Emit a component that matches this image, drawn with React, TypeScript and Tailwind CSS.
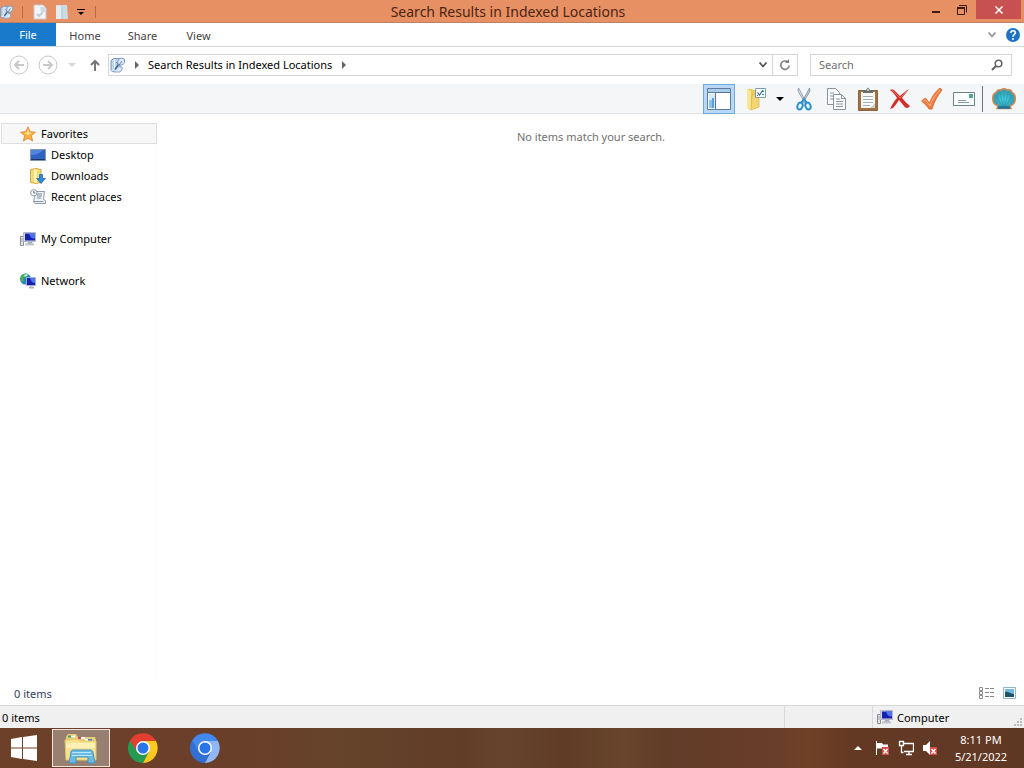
import type { ReactNode } from "react";

type IconProps = { className?: string };

function SearchPageIcon({ className = "w-4 h-4" }: IconProps) {
  return (
    <svg viewBox="0 0 16 16" className={className} fill="none">
      <path d="M4 1.500h6v11l-1.500 2h-6l-1.500-1v-10z" fill="#bed5ee" stroke="#7391b8" />
      <path d="M4.500 2v10l-3 1.500" stroke="#e9f2fb" />
      <path d="M10 10h2v3l-2 2H3.500" fill="#dce9f6" stroke="#8ba6c8" />
      <path d="M5 12.500l3.500-5" stroke="#44648f" strokeWidth="1.600" />
      <path d="M8.500 2.500l2.500-1.500 3.500 1v3.500l-2 2.500H9L7.500 6z" fill="#dcebf8" stroke="#7c99bd" />
      <path d="M6 5l3 3 3-4" stroke="#5f7fab" />
    </svg>
  );
}

function ComputerIcon({ className = "w-4 h-4" }: IconProps) {
  return (
    <svg viewBox="0 0 16 16" className={className}>
      <path d="M.5 5.500h3v9h-3z" fill="#e3e5e9" stroke="#8b8e96" />
      <path d="M1.500 8h1M1.500 10h1" stroke="#666" />
      <path d="M3.500 1.500h12v9h-12z" fill="#d4d7e2" stroke="#b4b8c8" />
      <path d="M5 2.500h10v7H5z" fill="#1420ae" />
      <path d="M9 2.500h6v5c-4 0-5-2-6-5z" fill="#4e72ea" />
      <path d="M8 11h4l1 2H7z" fill="#a8acb9" />
      <path d="M5 13.500h9" stroke="#c1c4cd" strokeWidth="2" />
    </svg>
  );
}

function NetworkIcon() {
  return (
    <svg viewBox="0 0 16 16" className="w-4 h-4">
      <circle cx="5.500" cy="6" r="5.500" fill="#2184c7" />
      <path d="M1 4c2-4 6-4 7-3L6 4 3 5l1 3-2 1C0 7 0 5 1 4z" fill="#4fb34a" />
      <path d="M4 2l3-1 1 1-3 2z" fill="#d7f0dc" />
      <path d="M6.500 4.500h9v8h-9z" fill="#cfd3e0" stroke="#a9aec2" />
      <path d="M7 5h8v7H7z" fill="#1420b4" />
      <path d="M10 5h5v5c-3 0-4-2-5-5z" fill="#4a76ee" />
      <path d="M9 14.500h5" stroke="#abb0bd" strokeWidth="2" />
    </svg>
  );
}

function StarIcon() {
  return (
    <svg viewBox="0 0 16 16" className="w-4 h-4">
      <path
        d="M8 .8l2.100 4.900 5.300.5-4 3.500 1.200 5.300L8 12.200 3.400 15l1.200-5.300-4-3.500 5.300-.5z"
        fill="#fbb040"
        stroke="#d9822b"
        strokeWidth=".8"
      />
      <path d="M8 3l1.300 3.600 3 .4L8 9 4 7l2.800-.4z" fill="#ffe08a" />
    </svg>
  );
}

function DesktopIcon() {
  return (
    <svg viewBox="0 0 16 16" className="w-4 h-4">
      <path d="M.5 2.500h15v11H.5z" fill="#2f62c2" stroke="#8296b5" />
      <path d="M1 3h12c-3 3-6 5-12 5z" fill="#5285dc" />
      <path d="M1 12.500h14" stroke="#23365c" />
    </svg>
  );
}

function DownloadsIcon() {
  return (
    <svg viewBox="0 0 16 16" className="w-4 h-4">
      <path d="M.5 1.500L6 .5l5 1v13l-5 1-5.500-1z" fill="#f3d878" stroke="#d2ac45" />
      <path d="M4 1l3 1v13l-3-1z" fill="#fff0b4" />
      <path d="M9.500 6.500h3v4h3L11 15.500l-4.500-5h3z" fill="#2d8ad8" stroke="#1c62a6" strokeWidth=".7" />
    </svg>
  );
}

function RecentIcon() {
  return (
    <svg viewBox="0 0 16 16" className="w-4 h-4" fill="none">
      <path d="M5 2.500h9.500l-1 8 2 1v3H5l-1.500-2 1-4z" fill="#eef1f5" stroke="#919ca8" />
      <path d="M7 5h5M7 7h5M7 9h4" stroke="#7e8b9c" />
      <path d="M3.500 12.500h10" stroke="#8995a3" />
      <circle cx="3.800" cy="3.800" r="3.200" fill="#f5f7fa" stroke="#8c99a8" />
      <path d="M3.800 2v2h1.500" stroke="#667" />
    </svg>
  );
}

function PaneIcon() {
  return (
    <svg viewBox="0 0 24 24" className="w-6 h-6">
      <path d="M.5 1.500h23v21H.5z" fill="#fff" stroke="#5b7c9d" />
      <path d="M1 2h22v3H1z" fill="#a9cdea" />
      <path d="M1 5.500h22M8.500 5v17" stroke="#54779b" />
      <path d="M2 7h6v14H2z" fill="#d6e8f9" />
      <path d="M2 13h5v8H2z" fill="#8fbff0" />
      <path d="M5 11h2v10H5z" fill="#5b9ce3" />
    </svg>
  );
}

function FolderOptionsIcon() {
  return (
    <svg viewBox="0 0 24 24" className="w-6 h-6">
      <path d="M3 2h5l4 2v17l-6 2-3-2z" fill="#edcb5b" />
      <path d="M3 2l4 2v19l-4-2z" fill="#fae699" />
      <path d="M8 8l7-1v13l-8 3z" fill="#f4d671" stroke="#d9b64c" strokeWidth=".7" />
      <path d="M11.500 1.500h10v9h-10z" fill="#f5fbff" stroke="#819bad" />
      <path d="M18 4.500h2M18 7.500h2M13 8.500h1" fill="none" stroke="#3979ad" />
      <path d="M13.500 5.500l2 2.500 3.500-5" fill="none" stroke="#2d6f78" strokeWidth="1.200" />
    </svg>
  );
}

function CutIcon() {
  return (
    <svg viewBox="0 0 24 24" className="w-6 h-6" fill="none">
      <path d="M6.500 1L15 17l-2-1L6 4z" fill="#e3e8ed" stroke="#7a8c9c" strokeWidth=".8" />
      <path d="M17.500 1L9 17l2-1 7-12z" fill="#c3ccd5" stroke="#7a8c9c" strokeWidth=".8" />
      <ellipse cx="8" cy="19" rx="2.500" ry="3.500" stroke="#2b91ce" strokeWidth="2" transform="rotate(22 8 19)" />
      <ellipse cx="16" cy="19" rx="2.500" ry="3.500" stroke="#2b91ce" strokeWidth="2" transform="rotate(-22 16 19)" />
      <path d="M9 16l3-4 3 4" stroke="#2b91ce" strokeWidth="1.800" />
    </svg>
  );
}

function CopyIcon() {
  return (
    <svg viewBox="0 0 24 24" className="w-6 h-6" fill="none" stroke="#8793a0">
      <path d="M3.500 1.500h8l4 4v12h-12z" fill="#f8fafc" />
      <path d="M6 6h4M6 9h3M6 12h3" />
      <path d="M9.500 7.500h8l4 4v11h-12z" fill="#fdfefe" />
      <path d="M17.500 7.500v4h4M12 12h4M12 14.500h7M12 17h7M12 19.500h7" />
    </svg>
  );
}

function PasteIcon() {
  return (
    <svg viewBox="0 0 24 24" className="w-6 h-6">
      <path d="M2.500 3.500h19v20h-19z" fill="#a5703f" stroke="#8a6541" />
      <path d="M5 5h14v16H5z" fill="#fafbf8" />
      <path d="M14 21l5-5v5z" fill="#ccd0cf" />
      <path d="M7 9.500h10M7 12.500h10M7 15.500h10M7 18.500h7" stroke="#a3b0b4" />
      <path d="M7 6V3h3l2-2.500L14 3h3v3z" fill="#66716b" />
      <circle cx="12" cy="3" r="1" fill="#dfe5df" />
    </svg>
  );
}

function DeleteIcon() {
  return (
    <svg viewBox="0 0 24 24" className="w-6 h-6">
      <path
        d="M2 3c3-1 4 0 5 1l5 5c3-3 6-5 9-7-2 3-5 6-7 9 3 3 5 6 8 8-2 3-5 2-6 0l-5-6c-2 3-4 6-6 8l-3 1c2-4 4-8 7-11-2-3-4-6-7-8z"
        fill="#cf2f28"
      />
      <path d="M4 3l8 8 7-7" fill="none" stroke="#e9705f" />
    </svg>
  );
}

function CheckIcon() {
  return (
    <svg viewBox="0 0 24 24" className="w-6 h-6">
      <path
        d="M1.500 14l4-3 4 5C12 9 16 4 20 1l2 2c-4 5-8 12-10 19H9c-2-3-5-6-7.500-8z"
        fill="#ef7c3e"
        stroke="#d8652e"
        strokeWidth=".8"
      />
      <path d="M3.500 14l2-1 4.500 6C12 12 16 7 20 3" fill="none" stroke="#f9b183" />
    </svg>
  );
}

function MailIcon() {
  return (
    <svg viewBox="0 0 24 24" className="w-6 h-6">
      <path d="M1.500 5.500h21v13h-21z" fill="#fdfefe" stroke="#6b818b" />
      <path d="M17 7h4v4h-4z" fill="#51a696" />
      <path d="M6 13.500h8M6 15.500h11" stroke="#8396a3" />
    </svg>
  );
}

function ShellIcon() {
  return (
    <svg viewBox="0 0 24 24" className="w-6 h-6">
      <defs>
        <radialGradient id="shell" cx="50%" cy="55%" r="60%">
          <stop offset="0" stopColor="#45dce8" />
          <stop offset=".6" stopColor="#35a3b8" />
          <stop offset="1" stopColor="#5d8f8c" />
        </radialGradient>
      </defs>
      <path
        d="M5 21.500l1-2.500C2 18 0 14 1 9.500 1 7 3 6 4 5.500c1-2 3-3 4.500-2.500 2-1.500 5-1.500 7 0 2-.5 4 .5 4.500 2.500 1 .5 3 1.500 3 4 1 4.500-1 8.500-5 9.500l1 2.500z"
        fill="url(#shell)"
        stroke="#cf8a52"
        strokeWidth="1.500"
      />
      <path d="M10 19L4 8M11 19L8 5M12 19V4M13 19l3-14M14 19l6-11" stroke="#2793ad" strokeWidth=".7" />
      <path d="M6 20.500h12" stroke="#1f6f96" strokeWidth="2.500" />
    </svg>
  );
}

function ChromeIcon({ top, left, right }: { top: string; left: string; right: string }) {
  return (
    <svg viewBox="0 0 30 30" className="w-[30px] h-[30px]">
      <path d="M15 15h-7L2 7.500A15 15 0 0 0 15 30l6.100-11.500z" fill={left} />
      <path d="M15 8h13a15 15 0 0 1-13 22l6.100-11.500z" fill={right} />
      <path d="M2 7.500a15 15 0 0 1 26 .5H15l-6.100 10.500z" fill={top} />
      <circle cx="15" cy="15" r="7" fill="#fff" />
      <circle cx="15" cy="15" r="5.500" fill="#2975e8" />
    </svg>
  );
}

function ExplorerIcon() {
  return (
    <svg viewBox="0 0 34 32" className="w-[34px] h-8">
      <path d="M2 5l2-3h8l2 3h17l1 3v20H2z" fill="#e6cd7c" />
      <path d="M4 3.500h5v2H4z" fill="#4b9b52" />
      <path d="M14 5h4v2h-4z" fill="#d2493d" />
      <path d="M22 7h6v2h-6z" fill="#3d83c8" />
      <path d="M7 3.500h4v2H7zM17 5h4v2h-4zM21 7h3v2h-3z" fill="#fff" />
      <path d="M1 8l12-1 3 2h16v19H2z" fill="#f7e292" stroke="#e4c765" />
      <path d="M2 11h29v5H2z" fill="#fdf0b6" />
      <path d="M5 31l2-11c0-2 2-2 2-2h17c2 0 3 1 3 3l2 10h-7v-6H12v6z" fill="#6cb9e5" stroke="#3c95c9" />
      <path d="M8 20.500h19M8 23.500h20" stroke="#bce8fb" />
    </svg>
  );
}

function TaskFlagIcon() {
  return (
    <svg viewBox="0 0 16 16" className="w-4 h-4">
      <path d="M2.500 1v14" stroke="#fff" />
      <path d="M3 3h5l1 1.500h5V10H9L8 8.500H3z" fill="#fff" />
      <path d="M8 7h7v8H8z" fill="#d84b47" />
      <path d="M9.500 9l4 4.500m0-4.500l-4 4.500" stroke="#fff" strokeWidth="1.500" />
    </svg>
  );
}

function TaskNetworkIcon() {
  return (
    <svg viewBox="0 0 16 16" className="w-4 h-4" fill="none" stroke="#fff">
      <path d="M6 3.500h9.500v8H6M8 14.500h6M11 12v2" strokeWidth="1.300" />
      <path d="M1.500 1.500h4v4h-4zM3.500 6v6.500h2" strokeWidth="1.300" />
    </svg>
  );
}

function SpeakerIcon() {
  return (
    <svg viewBox="0 0 16 16" className="w-4 h-4">
      <path d="M1 5h3l4-4v14l-4-4H1z" fill="#fff" />
      <path d="M8 7h7v8H8z" fill="#d84b47" />
      <path d="M9.500 9l4 4.500m0-4.500l-4 4.500" stroke="#fff" strokeWidth="1.500" />
    </svg>
  );
}

function Arrow({ className }: IconProps) {
  return (
    <svg viewBox="0 0 8 4" className={className}>
      <path d="M0 0h8L4 4z" fill="currentColor" />
    </svg>
  );
}

function RightArrow() {
  return (
    <svg viewBox="0 0 4 8" className="w-1 h-2">
      <path d="M0 0l4 4-4 4z" fill="#666" />
    </svg>
  );
}

const tools = [
  { label: "Cut", icon: <CutIcon /> },
  { label: "Copy", icon: <CopyIcon /> },
  { label: "Paste", icon: <PasteIcon /> },
  { label: "Delete", icon: <DeleteIcon /> },
  { label: "Rename", icon: <CheckIcon /> },
  { label: "Email", icon: <MailIcon /> },
];

function TitleBar() {
  return (
    <header className="grid grid-cols-[1fr_auto_1fr] h-[23px] bg-[#e79063] border-b border-[#b98267] text-[#4b2413]">
      <div className="flex items-center">
        <SearchPageIcon className="w-[14px] h-4" />
        <span className="w-px h-3 ml-2 mr-2.5 bg-[#b76845]" />
        <button aria-label="Properties" className="mr-2">
          <svg viewBox="0 0 14 16" className="w-[14px] h-4">
            <path d="M1 1h9l3 3v11H1z" fill="#f4f5fa" stroke="#cfc5cb" />
            <path d="M7 3h5v5H8z" fill="#c8dceb" />
            <path d="M4 10l2 2 4-4" fill="none" stroke="#c3cddd" strokeWidth="2" />
          </svg>
        </button>
        <button aria-label="New folder">
          <svg viewBox="0 0 14 16" className="w-[14px] h-4">
            <path d="M1 1h11l1 14H1z" fill="#cbdce5" />
            <path d="M1 1l5 1v13H1z" fill="#e3edf0" />
            <path d="M7 3v12" stroke="#b5c8d3" />
          </svg>
        </button>
        <button aria-label="Customize Quick Access Toolbar" className="ml-2 text-black">
          <svg viewBox="0 0 8 8" className="w-2 h-2">
            <path d="M0 1h8v1H0zM1 4h6L4 7z" fill="currentColor" />
          </svg>
        </button>
        <span className="w-px h-3 ml-2.5 bg-[#b76845]" />
      </div>
      <h1 className="pr-2 text-[14px] leading-[23px]">Search Results in Indexed Locations</h1>
      <div className="flex justify-end items-start pr-[3px]">
        <button aria-label="Minimize" className="w-6 h-[19px] flex items-end justify-center pb-1.5">
          <span className="w-2 h-0.5 bg-[#3c1b10]" />
        </button>
        <button aria-label="Restore" className="w-7 h-[19px] flex items-center justify-center">
          <svg viewBox="0 0 10 10" className="w-2.5 h-2.5" fill="none" stroke="#3c1b10">
            <path d="M.5 3h7v6.500h-7z" />
            <path d="M0 3h8" strokeWidth="2" />
            <path d="M2 .5h7.500v7" />
          </svg>
        </button>
        <button aria-label="Close" className="w-[45px] h-[19px] bg-[#c75050] flex items-center justify-center">
          <svg viewBox="0 0 8 8" className="w-2 h-2">
            <path d="M.5.5l7 7m0-7l-7 7" stroke="#fff" strokeWidth="1.500" />
          </svg>
        </button>
      </div>
    </header>
  );
}

function Ribbon() {
  return (
    <div className="flex h-6 border-b border-[#d5d8db]">
      <button className="w-14 bg-[#1979ca] text-white">File</button>
      <button className="w-[58px] pt-0.5">Home</button>
      <button className="w-[57px] pt-0.5">Share</button>
      <button className="w-[55px] pt-0.5">View</button>
      <div className="flex items-center gap-2.5 ml-auto pr-1">
        <button aria-label="Expand ribbon">
          <svg viewBox="0 0 8 6" className="w-2 h-1.5" fill="none" stroke="#999" strokeWidth="1.800">
            <path d="M.5.5L4 4.500 7.500.5" />
          </svg>
        </button>
        <button aria-label="Help">
          <svg viewBox="0 0 14 14" className="w-[14px] h-[14px]" fill="none">
            <circle cx="7" cy="7" r="7" fill="#1c73c4" />
            <path d="M4.800 5c0-3 4.600-3 4.600 0C9.400 6.500 7 6.500 7 8.700" stroke="#fff" strokeWidth="1.600" />
            <circle cx="7" cy="11" r="1" fill="#fff" />
          </svg>
        </button>
      </div>
    </div>
  );
}

function AddressRow() {
  return (
    <div className="flex items-center h-[37px] pl-[9px] pr-3 pb-px">
      <button aria-label="Back">
        <svg viewBox="0 0 20 20" className="w-5 h-5" fill="none" stroke="#c8c8c8">
          <circle cx="10" cy="10" r="9" />
          <path d="M15 10H6m4-4l-4 4 4 4" strokeWidth="2" />
        </svg>
      </button>
      <button aria-label="Forward" className="ml-[9px]">
        <svg viewBox="0 0 20 20" className="w-5 h-5" fill="none" stroke="#c8c8c8">
          <circle cx="10" cy="10" r="9" />
          <path d="M5 10h9m-4-4l4 4-4 4" strokeWidth="2" />
        </svg>
      </button>
      <button aria-label="Recent locations" className="ml-2.5 text-[#d6d6d6]">
        <Arrow className="w-2 h-1" />
      </button>
      <button aria-label="Up" className="ml-[13px]">
        <svg viewBox="0 0 12 12" className="w-3 h-3" fill="none" stroke="#777" strokeWidth="2">
          <path d="M6 12V2M2 6l4-4 4 4" />
        </svg>
      </button>
      <div className="flex flex-1 items-center h-[22px] ml-[7px] border border-[#d3d6d9] pl-px">
        <SearchPageIcon />
        <span className="ml-[9px]">
          <RightArrow />
        </span>
        <a href="#results" className="ml-[9px] mr-2.5 text-black">
          Search Results in Indexed Locations
        </a>
        <RightArrow />
        <button aria-label="Previous locations" className="ml-auto mr-[5px]">
          <svg viewBox="0 0 8 6" className="w-2 h-1.5" fill="none" stroke="#555" strokeWidth="1.800">
            <path d="M.5.5L4 4.500 7.500.5" />
          </svg>
        </button>
        <button aria-label="Refresh" className="w-[25px] h-full flex items-center justify-center border-l border-[#d3d6d9]">
          <svg viewBox="0 0 12 12" className="w-3 h-3" fill="none" stroke="#808080" strokeWidth="1.600">
            <path d="M9 3.200A4.200 4.200 0 1 0 10.200 6.500" />
            <path d="M6 4h4V0z" fill="#808080" stroke="none" />
          </svg>
        </button>
      </div>
      <label className="flex items-center w-[202px] h-[22px] ml-3 px-2 border border-[#d3d6d9]">
        <input
          type="text"
          aria-label="Search"
          placeholder="Search"
          className="flex-1 min-w-0 outline-none placeholder:text-[#707070]"
        />
        <svg viewBox="0 0 12 12" className="w-3 h-3" fill="none" stroke="#666">
          <circle cx="7.500" cy="4.500" r="3.300" strokeWidth="1.600" />
          <path d="M5 7L1 11" strokeWidth="2.200" />
        </svg>
      </label>
    </div>
  );
}

function Toolbar() {
  return (
    <div className="flex justify-end items-center h-[30px] bg-[#f4f6f8] border-b border-[#e1e4e7] pr-2">
      <button
        aria-label="Navigation pane"
        className="w-8 h-[30px] flex items-center justify-center bg-[#b9d8f5] border border-[#70a8dd]"
      >
        <PaneIcon />
      </button>
      <button aria-label="Folder options" className="ml-[9px]">
        <FolderOptionsIcon />
      </button>
      <button aria-label="More options" className="ml-2 text-black">
        <Arrow className="w-2 h-1" />
      </button>
      <div className="flex gap-2 ml-2">
        {tools.map((tool) => (
          <button key={tool.label} aria-label={tool.label}>
            {tool.icon}
          </button>
        ))}
      </div>
      <span className="w-px h-[26px] ml-1.5 mr-[9px] bg-[#6e7479]" />
      <button aria-label="Classic Shell">
        <ShellIcon />
      </button>
    </div>
  );
}

function NavItem({ icon, children, nested }: { icon: ReactNode; children: ReactNode; nested?: boolean }) {
  return (
    <a href="#results" className={nested ? "flex items-center gap-[5px] h-[21px] pl-[30px]" : "flex items-center gap-[5px] h-[21px] pl-5"}>
      {icon}
      {children}
    </a>
  );
}

function Sidebar() {
  return (
    <nav className="w-[157px] shrink-0 pt-[9px] border-r border-[#fafafa] text-black">
      <a href="#results" className="flex items-center gap-[5px] h-[21px] ml-px -mr-px pl-[18px] bg-[#f7f7f7] border border-[#dedede]">
        <StarIcon />
        Favorites
      </a>
      <NavItem nested icon={<DesktopIcon />}>Desktop</NavItem>
      <NavItem nested icon={<DownloadsIcon />}>Downloads</NavItem>
      <NavItem nested icon={<RecentIcon />}>Recent places</NavItem>
      <div className="mt-[21px]">
        <NavItem icon={<ComputerIcon />}>My Computer</NavItem>
      </div>
      <div className="mt-[21px]">
        <NavItem icon={<NetworkIcon />}>Network</NavItem>
      </div>
    </nav>
  );
}

function StatusBars() {
  return (
    <>
      <div className="flex items-center h-6 pl-3.5 pr-2 text-[#33405f]">
        <span className="pt-0.5">0 items</span>
        <div className="flex items-center gap-2 ml-auto">
          <button aria-label="Details view">
            <svg viewBox="0 0 16 12" className="w-4 h-3" fill="none" stroke="#888">
              <path d="M.5.5h3v3h-3zM.5 4.500h3v3h-3zM.5 8.500h3v3h-3z" />
              <path d="M6 1.500h4M11 1.500h4M6 5.500h4M11 5.500h4M6 9.500h4M11 9.500h4" />
            </svg>
          </button>
          <button aria-label="Large icons view">
            <svg viewBox="0 0 13 12" className="w-[13px] h-3">
              <path d="M.5.5h12v11H.5z" fill="#fff" stroke="#8bb6ce" />
              <path d="M2 2h9v8H2z" fill="#70b8dd" />
              <path d="M2 5c3-1 5 2 9 2v3H2z" fill="#205269" />
            </svg>
          </button>
        </div>
      </div>
      <div className="flex h-[23px] bg-[#f0f0f0] border-t border-[#d7d7d7] text-black">
        <span className="flex-1 pl-0.5 pt-1">0 items</span>
        <span className="w-[88px] border-l border-[#d9d9d9]" />
        <span className="flex items-center gap-1 w-[152px] pl-1 border-l border-[#d9d9d9]">
          <ComputerIcon />
          <span className="pt-0.5">Computer</span>
          <svg viewBox="0 0 8 8" className="w-2 h-2 ml-auto mr-0.5 self-end mb-0.5" fill="#bbb">
            <path d="M6 0h2v2H6zM3 3h2v2H3zM6 3h2v2H6zM0 6h2v2H0zM3 6h2v2H3zM6 6h2v2H6z" />
          </svg>
        </span>
      </div>
    </>
  );
}

function Taskbar() {
  return (
    <footer className="flex items-center h-10 bg-[linear-gradient(90deg,#6d4029_0%,#6a3f2a_24%,#66432a_32%,#613d28_45%,#66442c_49%,#603c27_55%,#68452c_61%,#613c28_65%,#693e2a_76%,#6f4226_79%,#643924_83%,#5f3823_100%)] text-white">
      <button aria-label="Start" className="w-[52px] pl-[11px]">
        <svg viewBox="0 0 26 26" className="w-[26px] h-[26px]" fill="#fff">
          <path d="M0 4l11-2v10.500H0zM12 2l14-2v12.500H12zM0 13.500h11V24L0 22zM12 13.500h14V26l-14-2z" />
        </svg>
      </button>
      <button aria-label="File Explorer" className="w-[58px] h-[38px] flex items-center justify-center bg-[#997f70] border border-[#efe4dd]">
        <ExplorerIcon />
      </button>
      <button aria-label="Google Chrome" className="ml-[18px]">
        <ChromeIcon top="#e43e30" left="#249b50" right="#fbc922" />
      </button>
      <button aria-label="Chromium" className="ml-8">
        <ChromeIcon top="#4388ec" left="#336fd0" right="#91b8f6" />
      </button>
      <div className="flex items-center ml-auto">
        <button aria-label="Show hidden icons">
          <svg viewBox="0 0 8 4" className="w-2 h-1">
            <path d="M0 4h8L4 0z" fill="#fff" />
          </svg>
        </button>
        <div className="flex items-center gap-2 ml-3">
          <TaskFlagIcon />
          <TaskNetworkIcon />
          <SpeakerIcon />
        </div>
        <time dateTime="2022-05-21T20:11" className="w-[86px] leading-[17px] text-center">
          8:11 PM
          <br />
          5/21/2022
        </time>
      </div>
    </footer>
  );
}

export default function App() {
  return (
    <div className="flex flex-col min-h-screen bg-white font-['Noto_Sans',sans-serif] text-[11px] leading-4 text-[#444]">
      <TitleBar />
      <Ribbon />
      <AddressRow />
      <Toolbar />
      <div className="flex flex-1">
        <Sidebar />
        <main id="results" className="flex-1 pt-[15px] pl-px text-center text-[#707070]">
          No items match your search.
        </main>
      </div>
      <StatusBars />
      <Taskbar />
    </div>
  );
}
